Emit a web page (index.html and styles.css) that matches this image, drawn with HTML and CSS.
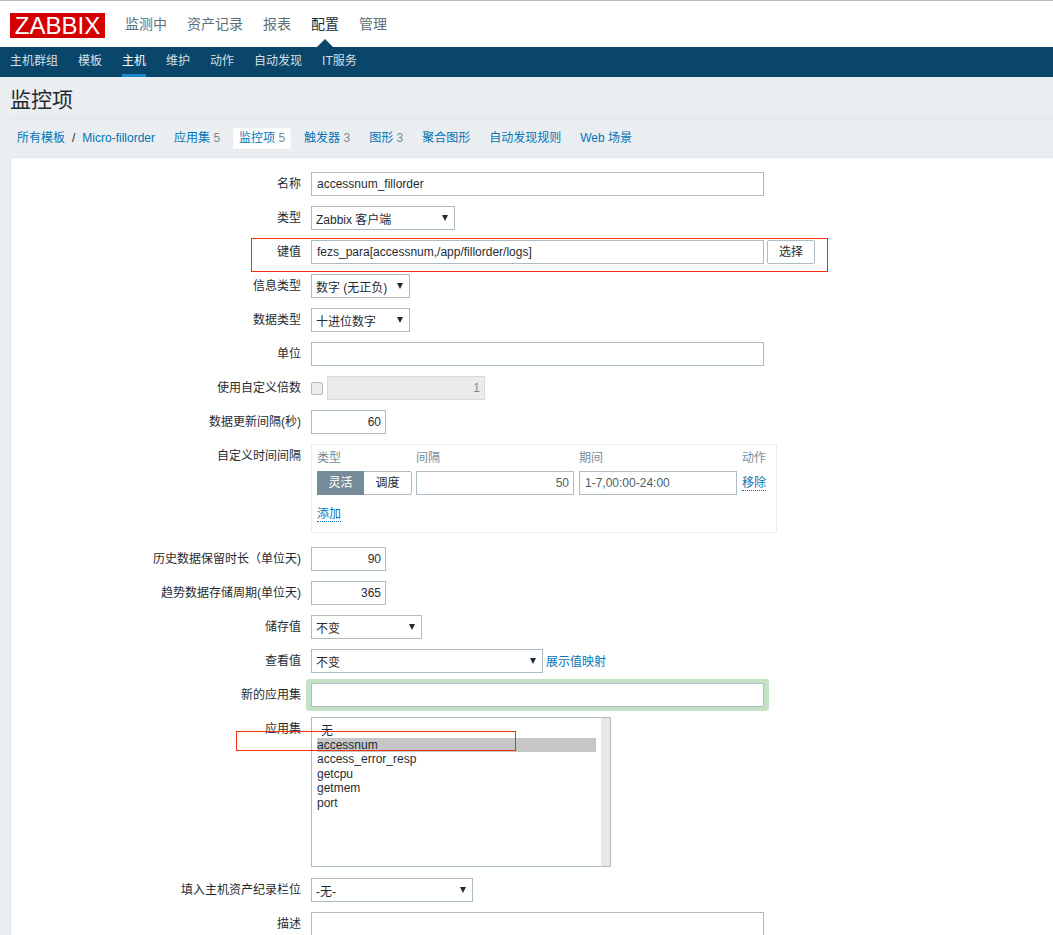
FILE: index.html
```html
<!DOCTYPE html>
<html lang="zh">
<head>
<meta charset="utf-8">
<title>监控项</title>
<link rel="stylesheet" href="styles.css">
</head>
<body>
<header class="top">
  <a class="logo">ZABBIX</a>
  <nav class="main-nav">
    <a>监测中</a><a>资产记录</a><a>报表</a><a class="current">配置</a><a>管理</a>
  </nav>
</header>
<nav class="sub-nav">
  <a>主机群组</a><a>模板</a><a class="current">主机</a><a>维护</a><a>动作</a><a>自动发现</a><a>IT服务</a>
</nav>
<div class="title-bar"><h1>监控项</h1></div>
<nav class="tabs">
  <div class="crumbs"><a>所有模板</a><span class="slash">/</span><a>Micro-fillorder</a></div>
  <a class="tab">应用集 <span class="count">5</span></a>
  <a class="tab active">监控项 <span class="count">5</span></a>
  <a class="tab">触发器 <span class="count">3</span></a>
  <a class="tab">图形 <span class="count">3</span></a>
  <a class="tab">聚合图形</a>
  <a class="tab">自动发现规则</a>
  <a class="tab">Web 场景</a>
</nav>
<main class="panel">
  <form class="form">
    <div class="row"><label>名称</label><div class="field"><input class="text w-wide" value="accessnum_fillorder"></div></div>
    <div class="row"><label>类型</label><div class="field"><span class="sel w-144"><select><option>Zabbix 客户端</option></select></span></div></div>
    <div class="row"><label>键值</label><div class="field gap-3"><input class="text w-wide" value="fezs_para[accessnum,/app/fillorder/logs]"><button type="button" class="btn">选择</button></div></div>
    <div class="row"><label>信息类型</label><div class="field"><span class="sel w-99"><select><option>数字 (无正负)</option></select></span></div></div>
    <div class="row"><label>数据类型</label><div class="field"><span class="sel w-99"><select><option>十进位数字</option></select></span></div></div>
    <div class="row"><label>单位</label><div class="field"><input class="text w-wide"></div></div>
    <div class="row"><label>使用自定义倍数</label><div class="field gap-4"><span class="check"></span><input class="text num w-158" value="1" disabled></div></div>
    <div class="row"><label>数据更新间隔(秒)</label><div class="field"><input class="text num w-75" value="60"></div></div>
    <div class="row iv-row"><label>自定义时间间隔</label>
      <div class="intervals">
        <div class="iv-grid">
          <span class="iv-head">类型</span><span class="iv-head">间隔</span><span class="iv-head">期间</span><span class="iv-head">动作</span>
          <div class="seg"><span class="seg-on">灵活</span><span class="seg-off">调度</span></div>
          <input class="text num soft w-158" value="50">
          <input class="text soft w-158" value="1-7,00:00-24:00">
          <a class="dotted">移除</a>
        </div>
        <a class="dotted add">添加</a>
      </div>
    </div>
    <div class="row"><label>历史数据保留时长（单位天)</label><div class="field"><input class="text num w-75" value="90"></div></div>
    <div class="row"><label>趋势数据存储周期(单位天)</label><div class="field"><input class="text num w-75" value="365"></div></div>
    <div class="row"><label>储存值</label><div class="field"><span class="sel w-111"><select><option>不变</option></select></span></div></div>
    <div class="row"><label>查看值</label><div class="field gap-3"><span class="sel w-232"><select><option>不变</option></select></span><a class="link">展示值映射</a></div></div>
    <div class="row"><label>新的应用集</label><div class="field"><input class="text w-wide new-app"></div></div>
    <div class="row"><label>应用集</label>
      <div class="listbox">
        <ul class="options">
          <li class="none">无</li>
          <li class="picked">accessnum</li>
          <li>access_error_resp</li>
          <li>getcpu</li>
          <li>getmem</li>
          <li>port</li>
        </ul>
        <div class="track"></div>
      </div>
    </div>
    <div class="row inv"><label>填入主机资产纪录栏位</label><div class="field"><span class="sel w-162"><select><option>-无-</option></select></span></div></div>
    <div class="row"><label>描述</label><div class="field"><textarea class="text w-wide desc"></textarea></div></div>
  </form>
</main>
<div class="mark mark-key"></div>
<div class="mark mark-app"></div>
</body>
</html>
```
FILE: styles.css
```css
* { box-sizing: border-box; }
html, body { height: 935px; overflow: hidden; }
body {
  margin: 0;
  position: relative;
  background: #ebeef0;
  color: #1f2c33;
  font: 12px/14px "Liberation Sans", "Noto Sans CJK SC", sans-serif;
}
a { color: #0275b8; }

.top {
  height: 47px;
  background: #fff;
  border-top: 1px solid #bdbdbd;
  display: flex;
  align-items: center;
  padding-left: 10px;
  gap: 20px;
}
.logo {
  width: 95px;
  height: 25px;
  margin-top: 3px;
  background: #d40000;
  color: #fff;
  font-size: 24px;
  line-height: 25px;
  text-align: center;
}
.main-nav { display: flex; gap: 20px; font-size: 14px; line-height: 20px; }
.main-nav a { color: #5d6f79; position: relative; }
.main-nav a.current { color: #1f2c33; }
.main-nav a.current::after {
  content: "";
  position: absolute;
  left: 6px;
  top: 25px;
  border: 8px solid transparent;
  border-top: 0;
  border-bottom-color: #0a466a;
}

.sub-nav {
  height: 30px;
  background: #0a466a;
  display: flex;
  gap: 20px;
  padding-left: 10px;
}
.sub-nav a { color: #d6dfe4; line-height: 29px; height: 30px; }
.sub-nav a.current { color: #fff; border-bottom: 3px solid #1a87cc; }

.title-bar {
  height: 42px;
  margin-left: 10px;
  border-bottom: 1px solid #dfe4e7;
}
.title-bar h1 { margin: 0; font-size: 21px; font-weight: 400; line-height: 45px; }

.tabs {
  height: 38px;
  padding: 9px 0 0 11px;
  display: flex;
  gap: 7px;
  align-items: flex-start;
}
.crumbs { display: flex; padding: 0 6px; line-height: 21px; }
.slash { margin: 0 7px; color: #1f2c33; }
.tab { height: 21px; line-height: 21px; padding: 0 6px; }
.tab.active {
  background: #fff;
  color: #0275b8;
  border: 1px solid #f8f9fa;
  line-height: 19px;
  padding: 0 5px;
}
.count { color: #768d99; }

.panel {
  margin-left: 10px;
  height: 778px;
  overflow: hidden;
  background: #fff;
  border-left: 1px solid #dfe4e7;
  border-top: 1px solid #dfe4e7;
  padding-top: 14px;
}
.form { display: flex; flex-direction: column; gap: 10px; }
.row { display: grid; grid-template-columns: 290px 1fr; column-gap: 10px; }
.row.inv { margin-top: 1px; }
.row.iv-row { margin-bottom: 4px; }
.row > label { text-align: right; height: 24px; line-height: 25px; }
.field { display: flex; align-items: center; }
.gap-3 { gap: 3px; }
.gap-4 { gap: 4px; }

.text {
  height: 24px;
  border: 1px solid #acbbc4;
  background: #fff;
  color: #1f2c33;
  font: inherit;
  padding: 0 5px;
  border-radius: 0;
  outline: 0;
  display: block;
}
.num { text-align: right; padding-right: 4px; }
.text:disabled { background: #ebebeb; color: #768d99; border-color: #d5dadd; }
.soft { color: #4f5f68; }
.w-wide { width: 453px; }
.w-158 { width: 158px; }
.w-75 { width: 75px; }
.desc { height: 75px; resize: none; }
.new-app {
  border-radius: 1px;
  box-shadow: 0 0 0 4px #c5e1c5, -1px 0 0 4px #c5e1c5, 1px 0 0 4px #c5e1c5;
}

.btn {
  width: 48px;
  height: 24px;
  background: #fff;
  border: 1px solid #acbbc4;
  border-radius: 2px;
  color: #1f2c33;
  font: inherit;
  padding: 0;
}
.check {
  width: 12px;
  height: 13px;
  border: 1px solid #acbbc4;
  border-radius: 2px;
  background: #ececec;
}

.sel { display: block; position: relative; height: 24px; }
.sel select {
  appearance: none;
  width: 100%;
  height: 24px;
  border: 1px solid #acbbc4;
  border-radius: 0;
  background: #fff;
  color: #1f2c33;
  font: inherit;
  padding: 3px 4px 0;
  outline: 0;
}
.sel::after {
  content: "";
  position: absolute;
  right: 7px;
  top: 9px;
  border-left: 3px solid transparent;
  border-right: 3px solid transparent;
  border-top: 6px solid #1f2c33;
  pointer-events: none;
}
.w-144 { width: 144px; }
.w-99 { width: 99px; }
.w-111 { width: 111px; }
.w-232 { width: 232px; }
.w-162 { width: 162px; }
.link { white-space: nowrap; margin-top: 2px; }

.intervals {
  width: 466px;
  height: 89px;
  border: 1px solid #ebeef0;
  padding: 6px 5px 0;
}
.iv-grid {
  display: grid;
  grid-template-columns: 99px 163px 163px auto;
  row-gap: 6px;
  align-items: center;
}
.iv-head { color: #768d99; }
.seg {
  width: 95px;
  height: 24px;
  display: flex;
  border: 1px solid #acbbc4;
  border-radius: 2px;
  line-height: 23px;
  text-align: center;
}
.seg-on { width: 47px; background: #768d99; color: #fff; margin: -1px 0 -1px -1px; line-height: 25px; }
.seg-off { flex: 1; }
.dotted {
  display: inline-block;
  border-bottom: 1px dotted #0275b8;
  line-height: 14px;
  justify-self: start;
  padding-top: 1px;
}
.add { margin-top: 11px; }

.listbox {
  width: 300px;
  height: 150px;
  border: 1px solid #acbbc4;
  display: flex;
  justify-content: space-between;
}
.options {
  list-style: none;
  margin: 0;
  padding: 5px 5px 0 5px;
  width: 289px;
  line-height: 14.6px;
}
.options .none { padding: 1px 0 0 4px; height: 14.6px; }
.options .picked { background: #c6c6c6; }
.track { width: 9px; background: #e8e8e8; }

.mark { position: absolute; border: 1px solid #f0300f; pointer-events: none; }
.mark-key { left: 251px; top: 238px; width: 577px; height: 34px; }
.mark-app { left: 236px; top: 731px; width: 280px; height: 20px; }
```
